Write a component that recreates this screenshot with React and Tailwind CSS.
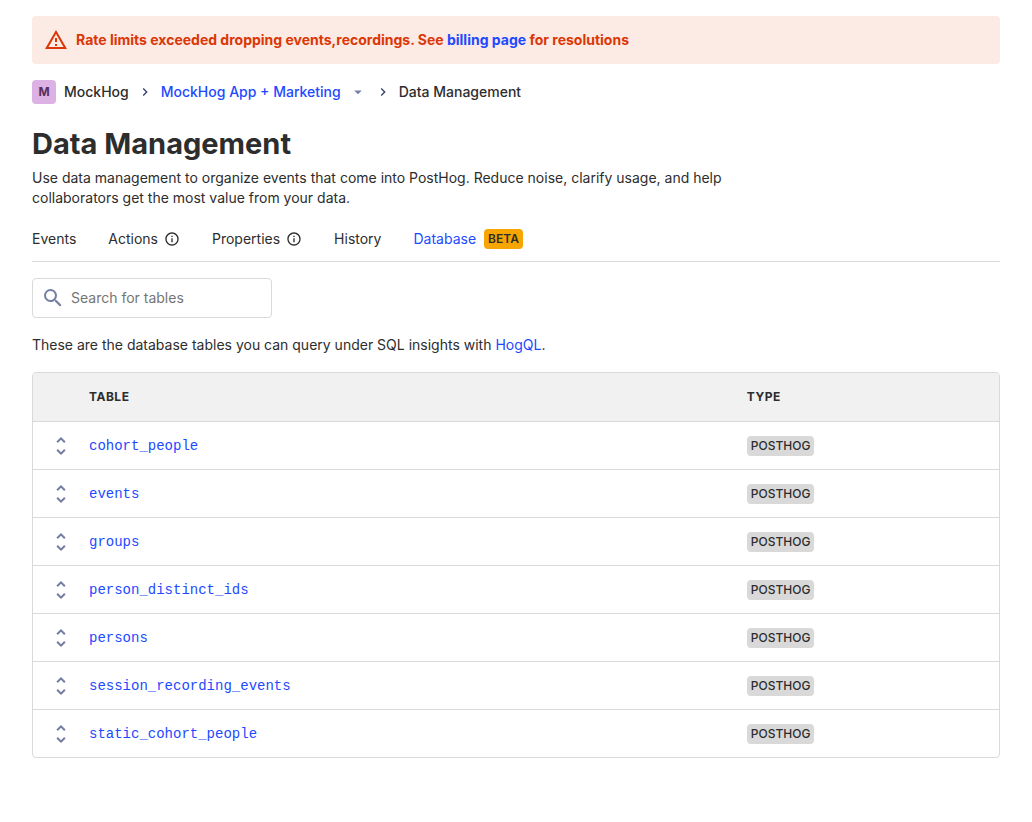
import React from "react";
import {
  MdArrowDropDown,
  MdChevronRight,
  MdInfoOutline,
  MdSearch,
  MdUnfoldMore,
} from "react-icons/md";

const TABLES = [
  "cohort_people",
  "events",
  "groups",
  "person_distinct_ids",
  "persons",
  "session_recording_events",
  "static_cohort_people",
];

const TABS = [
  { label: "Events" },
  { label: "Actions", info: true },
  { label: "Properties", info: true },
  { label: "History" },
  { label: "Database", active: true, tag: "BETA" },
];

function WarningIcon() {
  return (
    <svg viewBox="0 0 24 24" fill="currentColor" aria-hidden="true" className="size-6 shrink-0">
      <path d="M12 5.99 19.53 19H4.47L12 5.99M12 2 1 21h22L12 2z" />
      <path d="M11 10h2v4h-2zM11 16h2v2h-2z" />
    </svg>
  );
}

function Banner() {
  return (
    <div role="alert" className="flex min-h-12 items-center gap-2 rounded bg-[#fceae4] px-3 font-bold text-[#db3707]">
      <WarningIcon />
      <p>
        Rate limits exceeded dropping events,recordings. See{" "}
        <a href="#billing" className="text-[#1d4aff]">billing page</a> for resolutions
      </p>
    </div>
  );
}

function Breadcrumbs() {
  return (
    <nav aria-label="Breadcrumb" className="mt-4 flex h-6 items-center gap-2 font-medium">
      <span className="flex size-6 items-center justify-center rounded bg-[#dcb1e3] text-xs font-bold text-[#572e5e]">M</span>
      <span>MockHog</span>
      <MdChevronRight className="size-4 text-[#35416b]" />
      <button type="button" className="flex items-center gap-2 text-[#1d4aff]">
        MockHog App + Marketing
        <MdArrowDropDown className="size-[18px] text-[#747ea2]" />
      </button>
      <MdChevronRight className="size-4 text-[#35416b]" />
      <span>Data Management</span>
    </nav>
  );
}

function Tabs() {
  return (
    <nav aria-label="Data management sections" className="mt-2 flex h-[46px] items-center gap-8 border-b border-[#d9d9d9]">
      {TABS.map((tab) => (
        <a
          key={tab.label}
          href={"#" + tab.label.toLowerCase()}
          aria-current={tab.active ? "page" : undefined}
          className={tab.active ? "flex items-center text-[#1d4aff]" : "flex items-center"}
        >
          {tab.label}
          {tab.info && <MdInfoOutline className="ml-1.5 size-4" />}
          {tab.tag && (
            <span className="ml-2 rounded bg-[#f7a501] px-1 text-xs leading-5 font-semibold text-[#2d2d2d]">{tab.tag}</span>
          )}
        </a>
      ))}
    </nav>
  );
}

function DatabaseTable() {
  return (
    <div className="mt-4 overflow-hidden rounded border border-[#d9d9d9]">
      <table className="w-full table-fixed border-separate border-spacing-0 text-left">
        <colgroup>
          <col className="w-12" />
          <col className="w-[68.1%]" />
          <col />
        </colgroup>
        <thead className="bg-[#f1f1f1] text-xs font-bold tracking-[0.5px]">
          <tr className="h-12">
            <td />
            <th scope="col" className="px-2">TABLE</th>
            <th scope="col" className="px-2">TYPE</th>
          </tr>
        </thead>
        <tbody>
          {TABLES.map((name) => (
            <tr key={name} className="h-12">
              <td className="border-t border-[#d9d9d9] pl-4">
                <button type="button" aria-label={"Expand " + name} className="block text-[#747ea2]">
                  <MdUnfoldMore className="size-6" />
                </button>
              </td>
              <td className="border-t border-[#d9d9d9] px-2 font-['Liberation_Mono',monospace]">
                <a href={"#" + name} className="text-[#1d4aff]">{name}</a>
              </td>
              <td className="border-t border-[#d9d9d9] px-2">
                <span className="block w-fit rounded bg-[#d9d9d9] px-1 text-xs leading-5 font-medium">POSTHOG</span>
              </td>
            </tr>
          ))}
        </tbody>
      </table>
    </div>
  );
}

export default function App() {
  return (
    <main className="px-8 pt-4 pb-16 font-['Inter',sans-serif] text-sm leading-5 text-[#2d2d2d]">
      <Banner />
      <Breadcrumbs />
      <h1 className="mt-5 text-[29px] leading-10 font-bold">Data Management</h1>
      <p className="mt-1 max-w-[720px]">
        Use data management to organize events that come into PostHog. Reduce noise, clarify usage, and help
        collaborators get the most value from your data.
      </p>
      <Tabs />
      <label className="mt-4 flex h-10 w-60 items-center gap-1.5 rounded border border-[#d9d9d9] px-2">
        <MdSearch className="size-6 shrink-0 text-[#747ea2]" />
        <input
          type="search"
          aria-label="Search for tables"
          placeholder="Search for tables"
          className="w-full min-w-0 bg-transparent outline-none placeholder:text-[#757575]"
        />
      </label>
      <p className="mt-4 leading-[22px]">
        These are the database tables you can query under SQL insights with{" "}
        <a href="#hogql" className="text-[#1d4aff]">HogQL</a>.
      </p>
      <DatabaseTable />
    </main>
  );
}
